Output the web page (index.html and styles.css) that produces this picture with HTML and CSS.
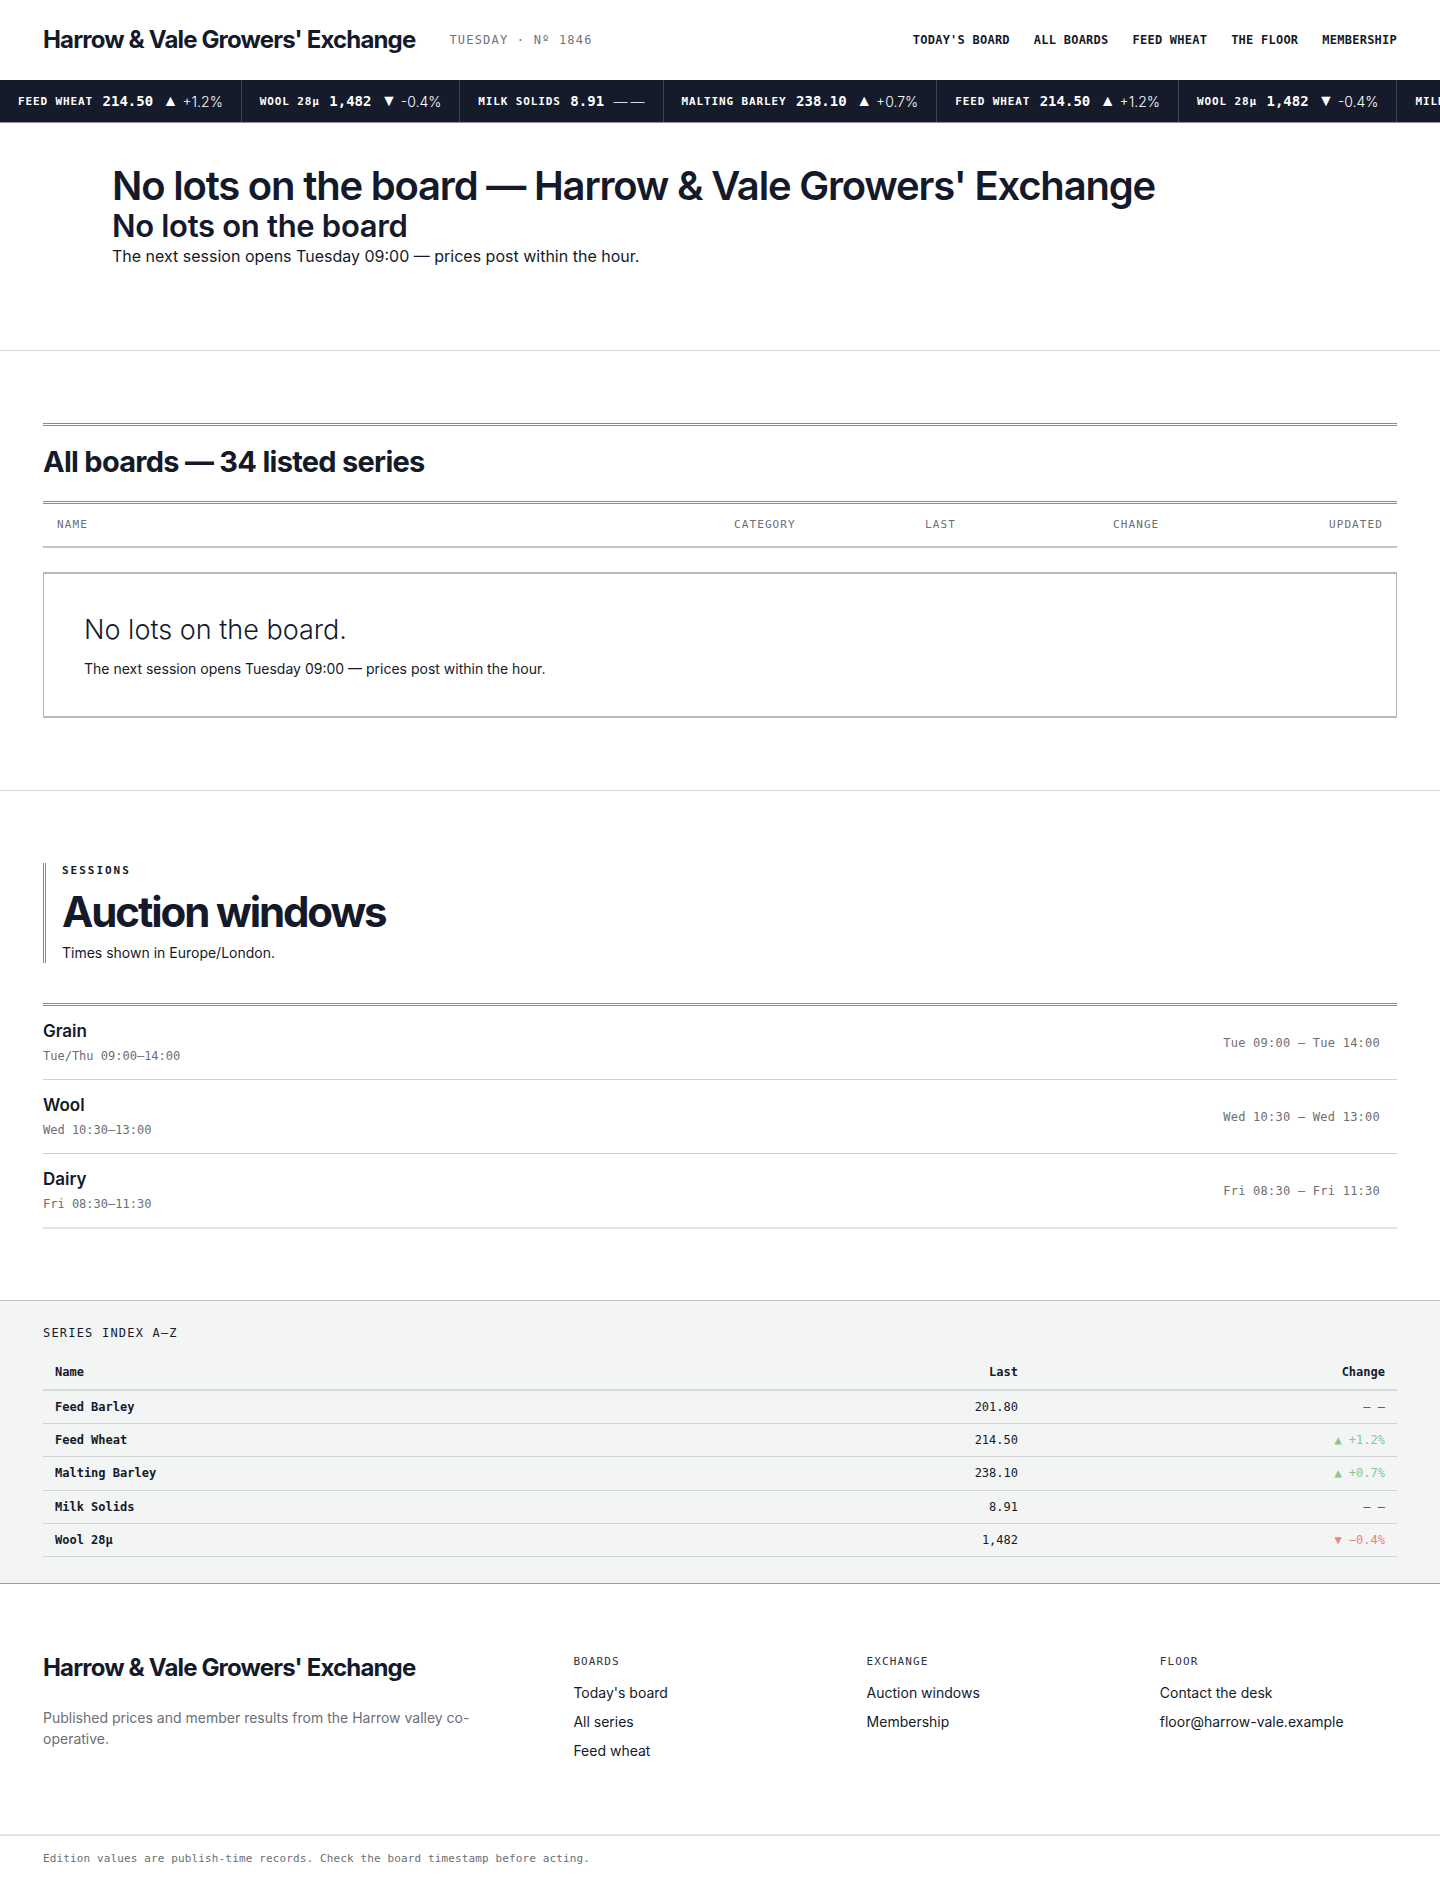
FILE: index.html
```html
<!DOCTYPE html>
<html lang="en">
<head>
    <meta charset="UTF-8">
    <meta name="viewport" content="width=device-width, initial-scale=1.0">
    <title>No lots on the board — Harrow &amp; Vale Growers' Exchange</title>
    <link rel="stylesheet" href="styles.css">
</head>
<body>
    <header class="masthead">
        <div class="brand-row">
            <a class="brand" href="#">Harrow &amp; Vale Growers' Exchange</a>
            <span class="edition">TUESDAY · Nº 1846</span>
        </div>
        <nav class="main-nav">
            <a href="#">TODAY'S BOARD</a>
            <a href="#">ALL BOARDS</a>
            <a href="#">FEED WHEAT</a>
            <a href="#">THE FLOOR</a>
            <a href="#">MEMBERSHIP</a>
        </nav>
    </header>

    <!-- price strip, repeats so it runs past the edge -->
    <div class="ticker">
        <div class="tick"><span class="tick-name">FEED WHEAT</span><span class="tick-last">214.50</span><span class="tick-chg"><i>▲</i>+1.2%</span></div>
        <div class="tick"><span class="tick-name">WOOL 28µ</span><span class="tick-last">1,482</span><span class="tick-chg"><i>▼</i>-0.4%</span></div>
        <div class="tick"><span class="tick-name">MILK SOLIDS</span><span class="tick-last">8.91</span><span class="tick-chg">— —</span></div>
        <div class="tick"><span class="tick-name">MALTING BARLEY</span><span class="tick-last">238.10</span><span class="tick-chg"><i>▲</i>+0.7%</span></div>
        <div class="tick"><span class="tick-name">FEED WHEAT</span><span class="tick-last">214.50</span><span class="tick-chg"><i>▲</i>+1.2%</span></div>
        <div class="tick"><span class="tick-name">WOOL 28µ</span><span class="tick-last">1,482</span><span class="tick-chg"><i>▼</i>-0.4%</span></div>
        <div class="tick"><span class="tick-name">MILK SOLIDS</span><span class="tick-last">8.91</span><span class="tick-chg">— —</span></div>
    </div>

    <section class="hero">
        <h1>No lots on the board — Harrow &amp; Vale Growers' Exchange</h1>
        <h2>No lots on the board</h2>
        <p>The next session opens Tuesday 09:00 — prices post within the hour.</p>
    </section>

    <section class="section boards">
        <div class="section-head">
            <h2>All boards — 34 listed series</h2>
        </div>
        <div class="board-head">
            <span>NAME</span>
            <span>CATEGORY</span>
            <span>LAST</span>
            <span>CHANGE</span>
            <span class="right">UPDATED</span>
        </div>
        <div class="empty-box">
            <h3>No lots on the board.</h3>
            <p>The next session opens Tuesday 09:00 — prices post within the hour.</p>
        </div>
    </section>

    <section class="section sessions">
        <div class="intro">
            <div class="eyebrow">SESSIONS</div>
            <h2>Auction windows</h2>
            <p>Times shown in Europe/London.</p>
        </div>
        <ul class="windows">
            <li>
                <div>
                    <div class="win-name">Grain</div>
                    <div class="win-days">Tue/Thu 09:00–14:00</div>
                </div>
                <div class="win-next">Tue 09:00 — Tue 14:00</div>
            </li>
            <li>
                <div>
                    <div class="win-name">Wool</div>
                    <div class="win-days">Wed 10:30–13:00</div>
                </div>
                <div class="win-next">Wed 10:30 — Wed 13:00</div>
            </li>
            <li>
                <div>
                    <div class="win-name">Dairy</div>
                    <div class="win-days">Fri 08:30–11:30</div>
                </div>
                <div class="win-next">Fri 08:30 — Fri 11:30</div>
            </li>
        </ul>
    </section>

    <section class="index-band">
        <div class="index-title">SERIES INDEX A–Z</div>
        <table class="index-table">
            <thead>
                <tr><th class="c-name">Name</th><th class="c-last">Last</th><th class="c-chg">Change</th></tr>
            </thead>
            <tbody>
                <tr><td class="c-name">Feed Barley</td><td class="c-last">201.80</td><td class="c-chg flat">– –</td></tr>
                <tr><td class="c-name">Feed Wheat</td><td class="c-last">214.50</td><td class="c-chg up">▲ +1.2%</td></tr>
                <tr><td class="c-name">Malting Barley</td><td class="c-last">238.10</td><td class="c-chg up">▲ +0.7%</td></tr>
                <tr><td class="c-name">Milk Solids</td><td class="c-last">8.91</td><td class="c-chg flat">– –</td></tr>
                <tr><td class="c-name">Wool 28µ</td><td class="c-last">1,482</td><td class="c-chg down">▼ −0.4%</td></tr>
            </tbody>
        </table>
    </section>

    <footer class="site-footer">
        <div class="footer-main">
            <div class="footer-about">
                <div class="brand">Harrow &amp; Vale Growers' Exchange</div>
                <p>Published prices and member results from the Harrow valley co-operative.</p>
            </div>
            <div class="footer-col">
                <h4>BOARDS</h4>
                <a href="#">Today's board</a>
                <a href="#">All series</a>
                <a href="#">Feed wheat</a>
            </div>
            <div class="footer-col">
                <h4>EXCHANGE</h4>
                <a href="#">Auction windows</a>
                <a href="#">Membership</a>
            </div>
            <div class="footer-col">
                <h4>FLOOR</h4>
                <a href="#">Contact the desk</a>
                <a href="#">floor@harrow-vale.example</a>
            </div>
        </div>
        <div class="footer-note">Edition values are publish-time records. Check the board timestamp before acting.</div>
    </footer>
</body>
</html>
```

FILE: styles.css
```css
body {
    margin: 0;
    font-family: "Inter", "Noto Sans", sans-serif;
    color: #141a2a;
    background-color: #fff;
}
a {
    color: inherit;
    text-decoration: none;
}
h1, h2, h3, h4, p {
    margin: 0;
}

/* top bar */
.masthead {
    height: 80px;
    padding: 0 43px;
    display: flex;
    align-items: center;
    justify-content: space-between;
}
.brand-row {
    display: flex;
    align-items: center;
    gap: 34px;
}
.brand {
    font-size: 24px;
    font-weight: 700;
    letter-spacing: -0.035em;
    line-height: 1.2;
}
.edition {
    font-family: "DejaVu Sans Mono", monospace;
    font-size: 12px;
    letter-spacing: 0.1em;
    color: #6f737c;
}
.main-nav {
    display: flex;
    gap: 24px;
}
.main-nav a {
    font-family: "DejaVu Sans Mono", monospace;
    font-size: 12px;
    font-weight: 700;
    letter-spacing: 0.02em;
}

/* price strip */
.ticker {
    display: flex;
    background-color: #151b2b;
    border-bottom: 1px solid #8a8f99;
    overflow: hidden;
    white-space: nowrap;
    color: #fff;
}
.tick {
    flex: none;
    height: 42px;
    padding: 0 18px;
    display: flex;
    align-items: center;
    gap: 9.5px;
    border-right: 1px solid #3d4454;
}
.tick-name {
    font-family: "DejaVu Sans Mono", monospace;
    font-size: 11px;
    font-weight: 700;
    letter-spacing: 0.08em;
}
.tick-last {
    font-family: "DejaVu Sans Mono", monospace;
    font-size: 14px;
    font-weight: 700;
}
.tick-chg {
    display: flex;
    align-items: center;
    gap: 4px;
    font-size: 14px;
    font-weight: 300;
    word-spacing: -1px;
}
.tick-chg i {
    font-style: normal;
    font-family: "DejaVu Sans", sans-serif;
    font-size: 16px;
    line-height: 1;
}

/* hero */
.hero {
    padding: 41px 112px 82px;
    border-bottom: 1px solid #d6d6d6;
}
.hero h1 {
    font-size: 40px;
    font-weight: 600;
    letter-spacing: -0.03em;
    line-height: 1.1;
}
.hero h2 {
    font-size: 31px;
    font-weight: 600;
    letter-spacing: -0.01em;
    line-height: 36px;
}
.hero p {
    font-size: 16px;
    line-height: 1.5;
}

.section {
    padding: 72px 43px;
}

/* all boards */
.boards {
    border-bottom: 1px solid #d6d6d6;
}
.section-head {
    border-top: 3px double #8a8a8a;
    padding: 21px 0 24px;
}
.section-head h2 {
    font-size: 29px;
    font-weight: 700;
    letter-spacing: -0.025em;
    line-height: 30px;
}
.board-head {
    display: grid;
    grid-template-columns: 677px 191px 188px 1fr 160px;
    border-top: 3px double #8a8a8a;
    border-bottom: 2px solid #c6c6c6;
}
.board-head span {
    padding: 14px;
    font-family: "DejaVu Sans Mono", monospace;
    font-size: 11px;
    line-height: 14px;
    letter-spacing: 0.1em;
    color: #6b6e75;
}
.board-head .right {
    text-align: right;
}
.empty-box {
    margin-top: 24px;
    border: 1px solid #b8b8b8;
    border-top-width: 2px;
    border-bottom-width: 2px;
    padding: 40px 40px 37px;
}
.empty-box h3 {
    font-size: 27px;
    font-weight: 300;
    line-height: 1.2;
}
.empty-box p {
    margin-top: 12px;
    font-size: 14px;
    line-height: 1.5;
}

/* sessions */
.sessions {
    padding-bottom: 71px;
}
.intro {
    border-left: 3px double #8a8a8a;
    padding-left: 16px;
}
.eyebrow {
    font-family: "DejaVu Sans Mono", monospace;
    font-size: 11px;
    font-weight: 700;
    letter-spacing: 0.18em;
    line-height: 16px;
}
.intro h2 {
    margin-top: 9px;
    font-size: 42px;
    font-weight: 700;
    letter-spacing: -0.05em;
    line-height: 48px;
}
.intro p {
    margin-top: 6px;
    font-size: 14px;
    line-height: 21px;
}
.windows {
    list-style: none;
    margin: 40px 0 0;
    padding: 0;
    border-top: 3px double #8a8a8a;
}
.windows li {
    display: flex;
    align-items: center;
    justify-content: space-between;
    padding: 14px 17px 14px 0;
    border-bottom: 1px solid #d0d0d0;
}
.windows li:last-child {
    border-bottom: 2px solid #e2e2e2;
}
.win-name {
    font-size: 17px;
    font-weight: 600;
    line-height: 22px;
}
.win-days {
    margin-top: 5px;
    font-family: "DejaVu Sans Mono", monospace;
    font-size: 12px;
    line-height: 18px;
    color: #6b6e75;
}
.win-next {
    font-family: "DejaVu Sans Mono", monospace;
    font-size: 12px;
    letter-spacing: 0.02em;
    color: #6b6e75;
}

/* series index */
.index-band {
    background-color: #f3f4f4;
    border-top: 1px solid #c2c2c2;
    border-bottom: 1px solid #9b9b9b;
    padding: 23px 43px 26px;
}
.index-title {
    font-family: "DejaVu Sans Mono", monospace;
    font-size: 12px;
    letter-spacing: 0.1em;
    line-height: 18px;
}
.index-table {
    margin-top: 14px;
    width: 100%;
    border-collapse: collapse;
    font-family: "DejaVu Sans Mono", monospace;
    font-size: 12px;
}
.index-table th,
.index-table td {
    padding: 7px 12px;
    line-height: 18.33px;
    border-bottom: 1px solid #cfd2d2;
}
.index-table th {
    font-weight: 700;
    border-bottom: 2px solid #d6d9d9;
}
.c-name {
    width: 627px;
    text-align: left;
    font-weight: 700;
}
.c-last {
    width: 312px;
    text-align: right;
}
.c-chg {
    text-align: right;
}
.up {
    color: #86c994;
}
.down {
    color: #e58787;
}
.flat {
    color: #555;
}

/* footer */
.footer-main {
    display: grid;
    grid-template-columns: 2fr 1fr 1fr 1fr;
    gap: 56px;
    padding: 70px 43px 72px;
}
.footer-about p {
    margin-top: 24px;
    font-size: 14px;
    line-height: 21px;
    color: #6b6e75;
}
.footer-col {
    display: flex;
    flex-direction: column;
    gap: 7px;
}
.footer-col h4 {
    font-family: "DejaVu Sans Mono", monospace;
    font-size: 11px;
    font-weight: 400;
    letter-spacing: 0.1em;
    line-height: 16px;
    margin-bottom: 5px;
    color: #2d323d;
}
.footer-col a {
    font-size: 14px;
    line-height: 22px;
}
.footer-note {
    border-top: 2px solid #e3e3e3;
    padding: 15px 43px 17px;
    font-family: "DejaVu Sans Mono", monospace;
    font-size: 11px;
    letter-spacing: 0.012em;
    line-height: 16px;
    color: #6b6e75;
}
```
